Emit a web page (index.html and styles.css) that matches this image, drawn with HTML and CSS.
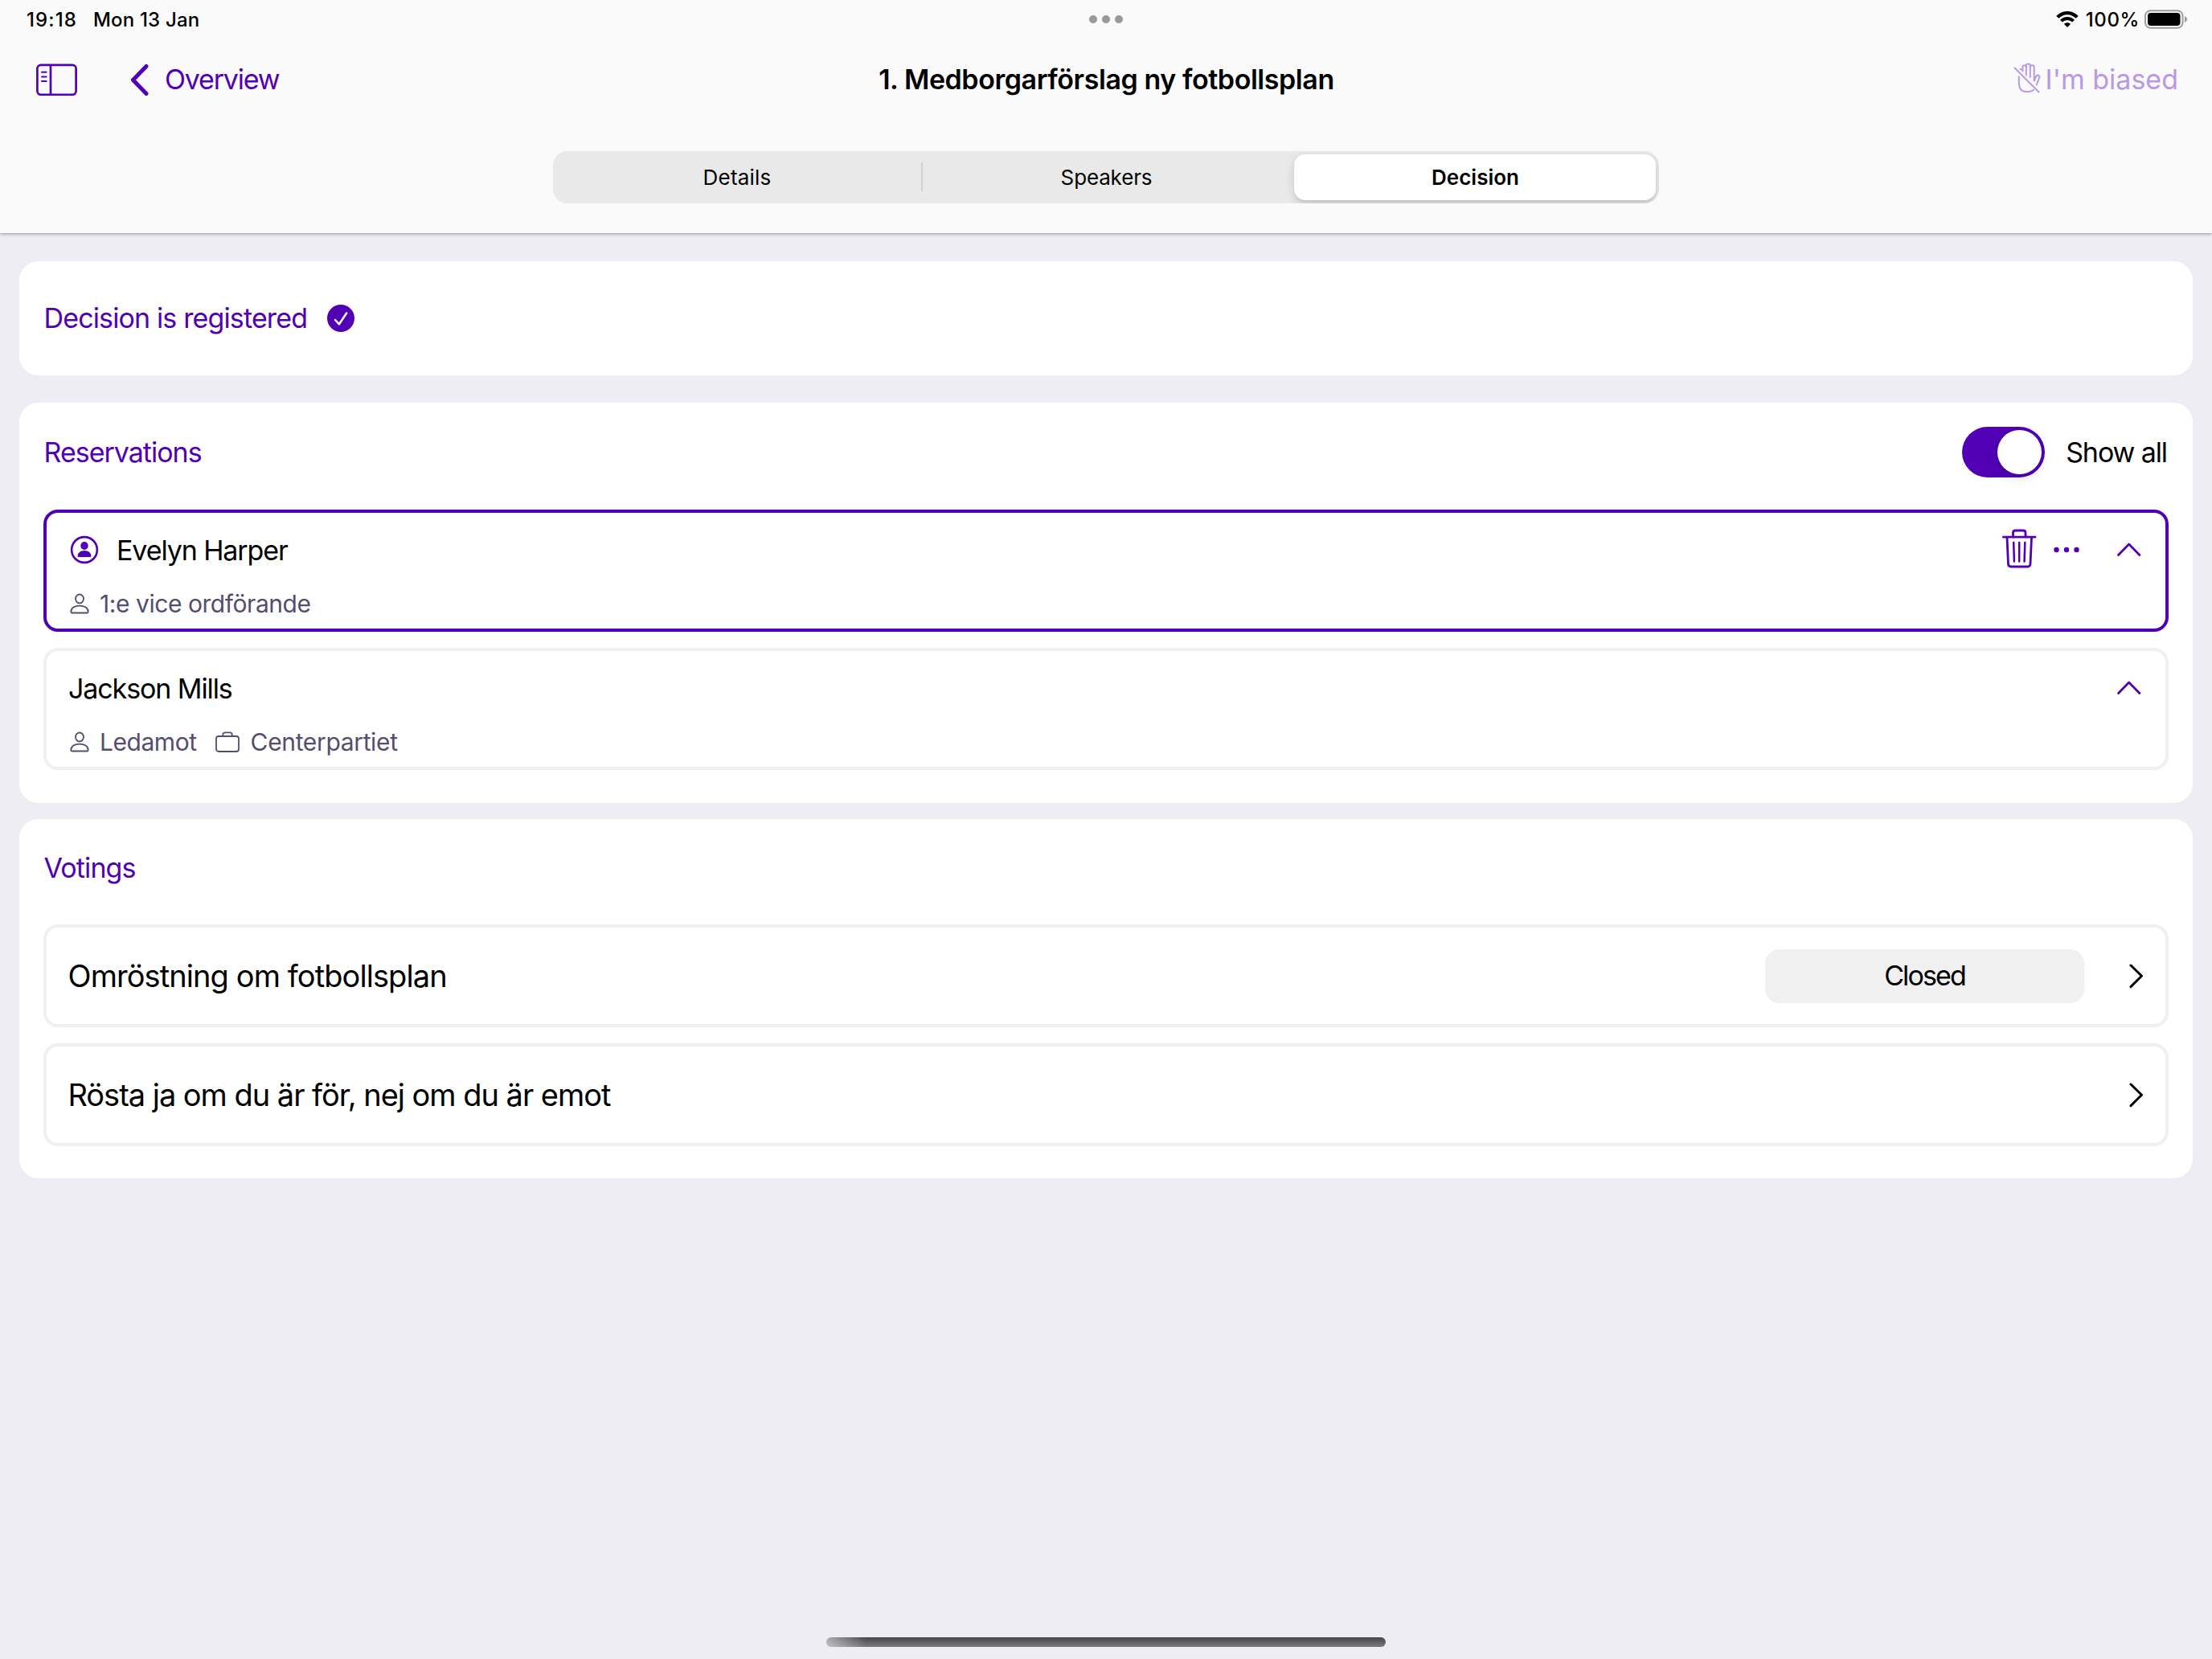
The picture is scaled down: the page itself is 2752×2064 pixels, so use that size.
FILE: index.html
```html
<!DOCTYPE html>
<html lang="en">
<head>
  <meta charset="UTF-8" />
  <meta name="viewport" content="width=device-width, initial-scale=1" />
  <title>Medborgarförslag ny fotbollsplan</title>
  <link rel="stylesheet" href="styles.css">
</head>
<body>
  <header class="header">
    <div class="status-bar">
      <div class="status-left">
        <span class="time">19:18</span>
        <span class="date">Mon 13 Jan</span>
      </div>
      <div class="dots"><i></i><i></i><i></i></div>
      <div class="status-right">
        <svg class="wifi" width="28" height="20" viewBox="0 0 28 20">
          <path d="M1.8 7.4C8.6 0.3 19.4 0.3 26.2 7.4" fill="none" stroke="#000" stroke-width="4.2"/>
          <path d="M6.4 12.2C10.7 7.9 17.3 7.9 21.6 12.2" fill="none" stroke="#000" stroke-width="4"/>
          <path d="M14 20L9.8 15.7C12.2 13.6 15.8 13.6 18.2 15.7Z" fill="#000"/>
        </svg>
        <span class="percent">100%</span>
        <svg class="battery" width="54" height="24" viewBox="0 0 54 24">
          <rect x="1" y="1.2" width="46.5" height="21.6" rx="6.5" fill="none" stroke="#9c9c9c" stroke-width="2"/>
          <rect x="4" y="4" width="40.5" height="16" rx="4" fill="#000"/>
          <path d="M50 8.2C52 8.8 53 10.3 53 12S52 15.2 50 15.8Z" fill="#9c9c9c"/>
        </svg>
      </div>
    </div>

    <nav class="nav-bar">
      <div class="nav-left">
        <svg class="sidebar-icon" width="52" height="40" viewBox="0 0 52 40" fill="none" stroke="#5200b5">
          <rect x="1.4" y="1.8" width="48.2" height="37" rx="4.5" stroke-width="2.7"/>
          <path d="M18 2V38.5" stroke-width="2.7"/>
          <path d="M7 10.8H12.6M7 16.5H12.6M7 21.9H12.6" stroke-width="2" stroke-linecap="round"/>
        </svg>
        <svg class="back-icon" width="24" height="40" viewBox="0 0 24 40" fill="none" stroke="#5200b5">
          <path d="M20 3.5L3.5 20.5L20 37.5" stroke-width="5" stroke-linecap="round" stroke-linejoin="round"/>
        </svg>
        <span class="back-label">Overview</span>
      </div>
      <h1>1. Medborgarförslag ny fotbollsplan</h1>
      <div class="nav-right">
        <svg class="hand-icon" width="34" height="38" viewBox="0 0 34 38" fill="none" stroke="#b999e2" stroke-width="2" stroke-linecap="round" stroke-linejoin="round">
          <path d="M1.5 6.5L31.5 36.5"/>
          <path d="M6.8 17.5V25C6.8 33 11 36.3 17 36.3C20.5 36.3 23 35.5 25 33.8"/>
          <path d="M8.5 8.3C10 7.8 11.5 8.6 11.5 10.5V5.2C11.5 2.6 15.8 2.6 15.8 5.2V3.5C15.8 0.8 20.8 0.8 20.8 3.5V5.2C20.8 2.6 25.7 2.6 25.7 5.2V22.5L28 17.2C29.3 14.5 33.2 15.5 32.2 18.6L28.8 27.5"/>
          <path d="M15.8 5V15.5M20.8 5V18"/>
        </svg>
        <span>I'm biased</span>
      </div>
    </nav>

    <div class="segments">
      <div class="segment">Details</div>
      <div class="segment divided">Speakers</div>
      <div class="segment active">Decision</div>
    </div>
  </header>

  <main class="content">
    <section class="card decision">
      <h2>Decision is registered</h2>
      <svg width="34" height="34" viewBox="0 0 34 34">
        <circle cx="17" cy="17" r="17" fill="#5200b5"/>
        <path d="M10 19L15 24.3L24.2 10.5" fill="none" stroke="#fff" stroke-width="2.5" stroke-linecap="round" stroke-linejoin="round"/>
      </svg>
    </section>

    <section class="card reservations">
      <div class="card-header">
        <h2>Reservations</h2>
        <div class="toggle-group">
          <div class="toggle"><div class="knob"></div></div>
          <span>Show all</span>
        </div>
      </div>

      <div class="person selected">
        <div class="person-top">
          <svg class="avatar" width="36" height="36" viewBox="0 0 36 36">
            <circle cx="18" cy="18" r="15.9" fill="none" stroke="#5200b5" stroke-width="2.6"/>
            <ellipse cx="18" cy="13" rx="4.7" ry="5" fill="#5200b5"/>
            <path d="M9.6 25.5C9.6 21.8 13 18.9 18 18.9S26.4 21.8 26.4 25.5Q26.4 27 25 27H11Q9.6 27 9.6 25.5Z" fill="#5200b5"/>
          </svg>
          <span class="name">Evelyn Harper</span>
          <div class="actions">
            <svg class="trash" width="44" height="52" viewBox="0 0 44 52" fill="none" stroke="#5200b5" stroke-width="2.8" stroke-linecap="round" stroke-linejoin="round">
              <path d="M2.5 12.2H42"/>
              <path d="M14.5 12V7Q14.5 4 17.5 4H27Q30 4 30 7V12"/>
              <path d="M7 13L8.5 45.5Q8.7 49 12 49H32.5Q35.8 49 36 45.5L37.5 13"/>
              <path d="M15.2 19L15.9 42.5M22.2 19V42.5M29.3 19L28.6 42.5" stroke-width="2.5"/>
            </svg>
            <svg class="more" width="34" height="8" viewBox="0 0 34 8" fill="#5200b5">
              <circle cx="4.5" cy="4" r="3.2"/><circle cx="17" cy="4" r="3.2"/><circle cx="29.5" cy="4" r="3.2"/>
            </svg>
            <svg class="chevron-up" width="34" height="20" viewBox="0 0 34 20" fill="none" stroke="#5200b5" stroke-width="2.8" stroke-linecap="round" stroke-linejoin="round">
              <path d="M3.5 16.5L16.7 3L29.9 16.5"/>
            </svg>
          </div>
        </div>
        <div class="person-info">
          <svg width="24" height="26" viewBox="0 0 24 26" fill="none" stroke="#554d70" stroke-width="1.8">
            <ellipse cx="12" cy="7" rx="5" ry="5.5"/>
            <path d="M1.3 23C1.3 18.5 6 15.6 12 15.6S22.7 18.5 22.7 23Q22.7 24.5 21.3 24.5H2.7Q1.3 24.5 1.3 23Z"/>
          </svg>
          <span>1:e vice ordförande</span>
        </div>
      </div>

      <div class="person">
        <div class="person-top">
          <span class="name first">Jackson Mills</span>
          <div class="actions">
            <svg class="chevron-up" width="34" height="20" viewBox="0 0 34 20" fill="none" stroke="#5200b5" stroke-width="2.8" stroke-linecap="round" stroke-linejoin="round">
              <path d="M3.5 16.5L16.7 3L29.9 16.5"/>
            </svg>
          </div>
        </div>
        <div class="person-info">
          <svg width="24" height="26" viewBox="0 0 24 26" fill="none" stroke="#554d70" stroke-width="1.8">
            <ellipse cx="12" cy="7" rx="5" ry="5.5"/>
            <path d="M1.3 23C1.3 18.5 6 15.6 12 15.6S22.7 18.5 22.7 23Q22.7 24.5 21.3 24.5H2.7Q1.3 24.5 1.3 23Z"/>
          </svg>
          <span>Ledamot</span>
          <svg class="party-icon" width="30" height="28" viewBox="0 0 30 28" fill="none" stroke="#554d70" stroke-width="1.8">
            <rect x="1" y="7" width="28" height="19" rx="3"/>
            <path d="M9.3 7V5Q9.3 2.4 12 2.4H18Q20.7 2.4 20.7 5V7"/>
          </svg>
          <span class="party">Centerpartiet</span>
        </div>
      </div>
    </section>

    <section class="card votings">
      <div class="card-header">
        <h2>Votings</h2>
      </div>
      <div class="voting">
        <span class="voting-title">Omröstning om fotbollsplan</span>
        <span class="badge">Closed</span>
        <svg width="20" height="32" viewBox="0 0 20 32" fill="none" stroke="#000" stroke-width="3" stroke-linecap="round" stroke-linejoin="round">
          <path d="M2 3L15.5 16.3L2 29.6"/>
        </svg>
      </div>
      <div class="voting">
        <span class="voting-title long">Rösta ja om du är för, nej om du är emot</span>
        <svg width="20" height="32" viewBox="0 0 20 32" fill="none" stroke="#000" stroke-width="3" stroke-linecap="round" stroke-linejoin="round">
          <path d="M2 3L15.5 16.3L2 29.6"/>
        </svg>
      </div>
    </section>
  </main>

  <footer class="home-area">
    <div class="home-bar"></div>
  </footer>
</body>
</html>
```

FILE: styles.css
```css
*, *::before, *::after {
  box-sizing: border-box;
}
body {
  margin: 0;
  height: 2064px;
  display: flex;
  flex-direction: column;
  background: #eeedf4;
  color: #000;
  font-family: Inter, 'Liberation Sans', sans-serif;
  font-size: 34px;
  white-space: nowrap;
}
svg {
  display: block;
  flex-shrink: 0;
}
h1, h2 {
  margin: 0;
  font-size: 34px;
}
h2 {
  color: #5200b5;
  font-weight: 400;
  letter-spacing: -1px;
}

/* Header */
.header {
  height: 290px;
  background: #fafafa;
  box-shadow: 0 1px 4px rgba(0, 0, 0, 0.4);
}
.status-bar {
  height: 48px;
  padding: 0 30px;
  display: grid;
  grid-template-columns: 1fr auto 1fr;
  align-items: center;
  font-size: 24px;
  font-weight: 500;
}
.status-left {
  padding-left: 3px;
  display: flex;
  gap: 20px;
}
.time {
  letter-spacing: 1.1px;
}
.date {
  letter-spacing: 0.2px;
}
.dots {
  display: flex;
  gap: 6px;
}
.dots i {
  width: 10px;
  height: 10px;
  border-radius: 50%;
  background: #999;
}
.status-right {
  display: flex;
  justify-content: flex-end;
  align-items: center;
}
.percent {
  margin: 0 6px 0 9px;
  letter-spacing: 0.6px;
}
.nav-bar {
  height: 101px;
  padding: 0 42px;
  display: grid;
  grid-template-columns: 1fr auto 1fr;
  align-items: center;
}
.nav-left, .nav-right {
  display: flex;
  align-items: center;
  color: #5200b5;
}
.nav-left {
  padding-left: 3px;
}
.back-icon {
  margin-left: 65px;
}
.back-label {
  margin-left: 19px;
  letter-spacing: -1.2px;
}
.nav-bar h1 {
  padding-left: 1px;
  font-weight: 600;
  letter-spacing: -0.43px;
}
.nav-right {
  justify-content: flex-end;
  color: #b999e2;
}
.nav-right span {
  margin-left: 6px;
}
.hand-icon {
  margin-top: -4px;
}
.segments {
  width: 1376px;
  height: 65px;
  margin: 39px auto 0;
  padding: 4px;
  display: grid;
  grid-template-columns: 454px 464px 450px;
  border-radius: 18px;
  background: #e9e9e9;
  font-size: 26px;
  overflow: hidden;
}
.segment {
  display: flex;
  align-items: center;
  justify-content: center;
}
.segment:first-child {
  padding-right: 4px;
  letter-spacing: 0.2px;
}
.divided {
  position: relative;
  padding-right: 3px;
  letter-spacing: -0.15px;
}
.divided::before {
  content: '';
  position: absolute;
  left: 0;
  top: 10px;
  width: 2px;
  height: 36px;
  background: #d2d2d3;
}
.active {
  padding-left: 1px;
  border-radius: 14px;
  background: #fff;
  font-weight: 600;
  box-shadow: 0 4px 12px rgba(0, 0, 0, 0.14), 0 3px 2px rgba(0, 0, 0, 0.05);
}

/* Cards */
.content {
  flex: 1;
  padding: 35px 24px 0;
}
.card {
  padding: 0 30px 40px;
  border-radius: 24px;
  background: #fff;
}
.decision {
  height: 142px;
  margin-bottom: 34px;
  padding-bottom: 0;
  display: flex;
  align-items: center;
  gap: 25px;
}
.decision h2 {
  padding: 0 0 2px 0.5px;
  letter-spacing: -0.86px;
}
.reservations {
  height: 498px;
  margin-bottom: 20px;
}
.votings {
  height: 447px;
}
.card-header {
  height: 133px;
  padding: 0 2px 11px 0.5px;
  display: flex;
  align-items: center;
  justify-content: space-between;
}
.votings .card-header {
  height: 131px;
}
.votings h2 {
  letter-spacing: -0.9px;
}
.toggle-group {
  display: flex;
  align-items: center;
  gap: 26px;
  letter-spacing: -1.1px;
}
.toggle {
  width: 103px;
  height: 63px;
  padding: 4px;
  display: flex;
  justify-content: flex-end;
  border-radius: 32px;
  background: #5200b5;
}
.knob {
  width: 55px;
  height: 55px;
  border-radius: 50%;
  background: #fff;
  box-shadow: 0 4px 14px rgba(0, 0, 0, 0.16);
}

/* Reservations */
.person {
  height: 152px;
  margin-bottom: 20px;
  padding: 0 28px;
  border: 4px solid #f0f0f0;
  border-radius: 18px;
}
.selected {
  border-color: #5200b5;
}
.person-top {
  height: 92px;
  display: flex;
  align-items: center;
}
.avatar {
  margin: 0 22px 0 1px;
}
.name {
  letter-spacing: -1.1px;
}
.first {
  margin-left: -1px;
}
.actions {
  margin-left: auto;
  display: flex;
  align-items: center;
}
.trash {
  margin-top: -5px;
}
.more {
  margin-left: 20px;
}
.chevron-up {
  margin-left: 44px;
}
.person-info {
  height: 42px;
  padding-left: 1px;
  display: flex;
  align-items: center;
  color: #554d70;
  font-size: 30px;
  letter-spacing: -0.45px;
}
.person-info svg + span {
  margin-left: 13px;
}
.party-icon {
  margin-left: 23px;
}
.person-info .party {
  margin-left: 14px;
  letter-spacing: -0.35px;
}

/* Votings */
.voting {
  height: 128px;
  margin-bottom: 20px;
  padding: 0 25px 0 26.5px;
  display: flex;
  align-items: center;
  border: 4px solid #f0f0f0;
  border-radius: 18px;
}
.voting-title {
  margin-right: auto;
  font-size: 38px;
  letter-spacing: -0.92px;
}
.long {
  letter-spacing: -1.03px;
}
.badge {
  width: 397px;
  height: 67px;
  margin-right: 56px;
  border-radius: 18px;
  background: #f0f0f0;
  line-height: 65px;
  text-align: center;
  letter-spacing: -1.9px;
}

.home-area {
  height: 27px;
  display: flex;
  justify-content: center;
}
.home-bar {
  width: 696px;
  height: 12px;
  border-radius: 6px;
  background:
    linear-gradient(to right, rgba(238, 237, 244, 0.6), rgba(238, 237, 244, 0) 50px),
    linear-gradient(#434547, #7b7b7d);
}
```
